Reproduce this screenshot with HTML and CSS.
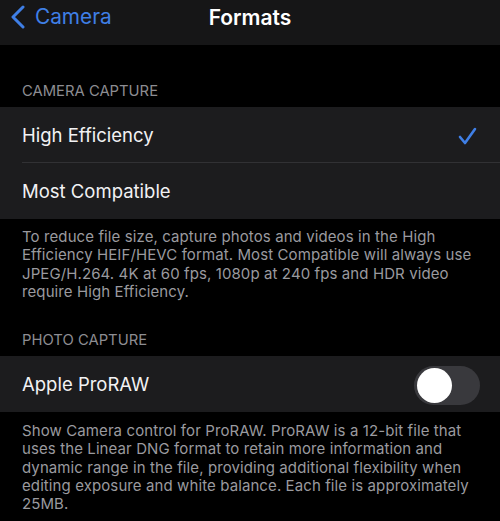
FILE: index.html
```html
<!DOCTYPE html>
<html>
<head>
<meta charset="utf-8">
<link rel="stylesheet" href="styles.css">
</head>
<body>
<div class="nav">
  <div class="back">
    <svg class="chev" width="16" height="24" viewBox="0 0 16 24"><path d="M13 2 L3 12 L13 22" fill="none" stroke="#3f7fe6" stroke-width="3" stroke-linecap="round" stroke-linejoin="round"/></svg>
    <span class="back-label">Camera</span>
  </div>
  <div class="title">Formats</div>
</div>

<div class="header h1">CAMERA CAPTURE</div>
<div class="group">
  <div class="row"><span class="label">High Efficiency</span>
    <svg class="check" width="19" height="18" viewBox="0 0 19 18"><path d="M2 10 L7 16 L17 2" fill="none" stroke="#3f7fe6" stroke-width="2.6" stroke-linecap="round" stroke-linejoin="round"/></svg>
  </div>
  <div class="sep"></div>
  <div class="row"><span class="label">Most Compatible</span></div>
</div>
<div class="footer">To reduce file size, capture photos and videos in the High Efficiency HEIF/HEVC format. Most Compatible will always use JPEG/H.264. 4K at 60 fps, 1080p at 240 fps and HDR video require High Efficiency.</div>

<div class="header h2">PHOTO CAPTURE</div>
<div class="group">
  <div class="row"><span class="label">Apple ProRAW</span>
    <div class="toggle"><div class="knob"></div></div>
  </div>
</div>
<div class="footer f2">Show Camera control for ProRAW. ProRAW is a 12-bit file that uses the Linear DNG format to retain more information and dynamic range in the file, providing additional flexibility when editing exposure and white balance. Each file is approximately 25MB.</div>
</body>
</html>
```

FILE: styles.css
```css
html, body {
  margin: 0;
  padding: 0;
  background: #000;
  font-family: Inter, "Noto Sans", sans-serif;
  overflow: hidden;
}
.nav {
  height: 45px;
  background: #161617;
  position: relative;
  display: flex;
  align-items: center;
  justify-content: center;
}
.back {
  position: absolute;
  left: 10px;
  top: 4px;
  display: flex;
  align-items: center;
  gap: 9px;
}
.back-label {
  color: #3f7fe6;
  font-size: 20.8px;
  line-height: 26px;
}
.title {
  color: #fff;
  font-size: 21px;
  font-weight: 600;
  margin-top: -11px;
}
.header {
  color: #8d8d92;
  font-size: 14.8px;
  line-height: 18px;
  padding: 0 22px 7px;
}
.h1 { padding-top: 37px; }
.h2 { padding-top: 30px; }
.group {
  background: #1c1c1e;
}
.row {
  height: 56px;
  display: flex;
  align-items: center;
  justify-content: space-between;
  padding: 0 20px 0 22px;
}
.label {
  color: #f2f2f4;
  font-size: 18.5px;
}
.sep {
  height: 1px;
  margin-left: 22px;
  background: #313134;
  margin-top: -1px;
}
.check { margin-right: 3px; margin-top: 1px; }
.footer {
  color: #9a9a9f;
  font-size: 15px;
  line-height: 18.3px;
  padding: 9px 22px 0;
  letter-spacing: 0.1px;
}
.f2 { padding-top: 10px; }
.toggle {
  width: 66px;
  height: 39px;
  border-radius: 20px;
  background: #39393d;
  position: relative;
  margin-top: 3px;
}
.knob {
  position: absolute;
  left: 3px;
  top: 2px;
  width: 35px;
  height: 35px;
  border-radius: 50%;
  background: #fff;
}
```
